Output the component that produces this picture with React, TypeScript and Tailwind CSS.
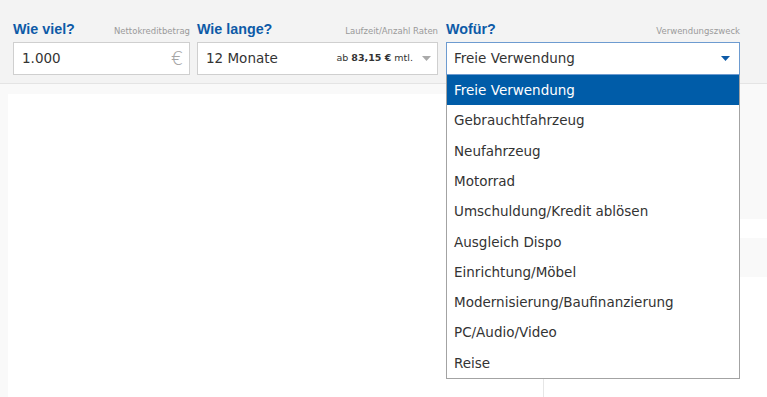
const OPTIONS = [
  "Freie Verwendung",
  "Gebrauchtfahrzeug",
  "Neufahrzeug",
  "Motorrad",
  "Umschuldung/Kredit ablösen",
  "Ausgleich Dispo",
  "Einrichtung/Möbel",
  "Modernisierung/Baufinanzierung",
  "PC/Audio/Video",
  "Reise",
];

function Caret({ color }: { color: string }) {
  return (
    <svg width="9" height="5" viewBox="0 0 9 5" className="shrink-0">
      <path d="M0 0h9L4.5 5z" fill={color} />
    </svg>
  );
}

function FieldLabel({ title, hint }: { title: string; hint: string }) {
  return (
    <div className="flex h-[16px] items-baseline justify-between">
      <span className="font-['Liberation_Sans',Arial,sans-serif] text-[14.3px] font-bold leading-[16px] text-[#0d5aa7]">
        {title}
      </span>
      <span className="text-[8.5px] leading-[16px] text-[#9a9a9a]">{hint}</span>
    </div>
  );
}

export default function App() {
  return (
    <div className="h-[397px] w-[767px] overflow-hidden bg-[#f9f9f9] font-['DejaVu_Sans',Verdana,sans-serif] text-[#333]">
      <header className="h-[84px] border-b border-[#e4e4e4] bg-[#f3f3f3] pl-[13px] pt-[21px]">
        <div className="flex">
          <div className="w-[177px]">
            <FieldLabel title="Wie viel?" hint="Nettokreditbetrag" />
            <div className="mt-[5px] flex h-[33px] items-center justify-between border border-[#cfcfcf] bg-white pl-[8px] pr-[6px]">
              <span className="text-[13.5px]">1.000</span>
              <span className="text-[19px] font-light leading-none text-[#a5a5a5]">€</span>
            </div>
          </div>

          <div className="ml-[7px] w-[241px]">
            <FieldLabel title="Wie lange?" hint="Laufzeit/Anzahl Raten" />
            <div className="mt-[5px] flex h-[33px] items-center justify-between border border-[#cfcfcf] bg-white pl-[8px] pr-[6px]">
              <span className="text-[13.5px]">12 Monate</span>
              <span className="flex items-center gap-[9px] text-[9.5px]">
                <span>
                  ab <b className="font-bold">83,15 €</b> mtl.
                </span>
                <Caret color="#aaaaaa" />
              </span>
            </div>
          </div>

          <div className="relative ml-[8px] w-[294px]">
            <FieldLabel title="Wofür?" hint="Verwendungszweck" />
            <div className="mt-[5px] flex h-[33px] items-center justify-between border border-[#6d9bd0] bg-white pl-[7px] pr-[9px]">
              <span className="text-[13.5px]">Freie Verwendung</span>
              <Caret color="#0d5aa7" />
            </div>
            <ul className="absolute left-0 right-0 top-[54px] z-10 border border-t-0 border-[#a3a3a3] bg-white">
              {OPTIONS.map((o, i) => (
                <li
                  key={o}
                  className={
                    i === 0
                      ? "flex h-[30.3px] items-center bg-[#005ca8] pl-[7px] text-[13.5px] text-white"
                      : "flex h-[30.3px] items-center pl-[7px] text-[13.5px] text-[#333]"
                  }
                >
                  {o}
                </li>
              ))}
            </ul>
          </div>
        </div>
      </header>

      <main className="flex pl-[8px] pt-[10px]">
        <div className="h-[303px] w-[725px] bg-white">
          <div className="ml-[535px] mt-[284px] h-[20px] w-[191px] border-x border-[#e6e6e6]" />
        </div>
        <div className="flex flex-1 flex-col">
          <div className="h-[125px]" />
          <div className="h-[19px] bg-white" />
          <div className="h-[39px]" />
          <div className="flex-1 bg-white" />
        </div>
      </main>
    </div>
  );
}
